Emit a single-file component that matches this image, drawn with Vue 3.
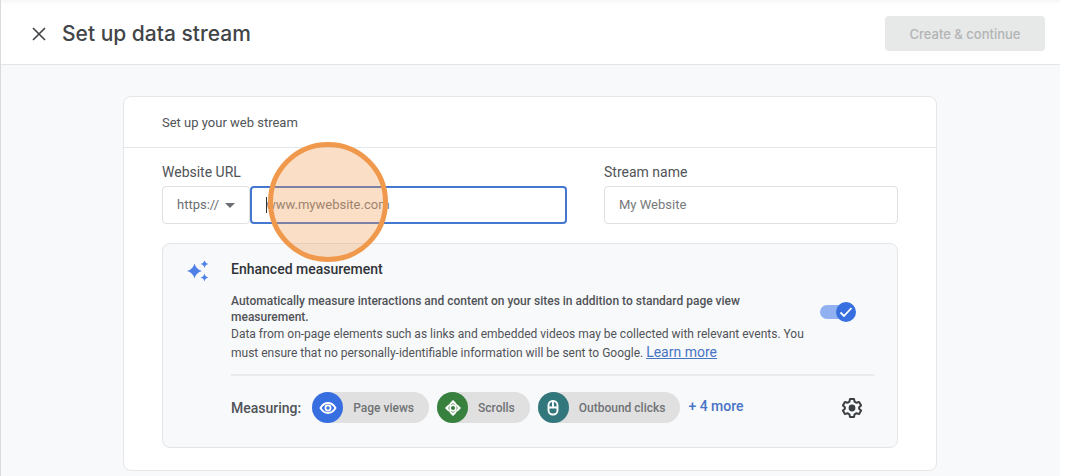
<script setup>
import { ref } from 'vue'

const protocol = ref('https://')
const url = ref('')
const streamName = ref('')
const enhanced = ref(true)
const chips = [
  { id: 'views', label: 'Page views' },
  { id: 'scrolls', label: 'Scrolls' },
  { id: 'clicks', label: 'Outbound clicks' },
]
</script>

<template>
  <div class="page">
    <header class="topbar">
      <button class="close" type="button" aria-label="Close">
        <svg width="14" height="14" viewBox="0 0 14 14"><path d="M1 1 13 13M13 1 1 13" fill="none" stroke="#44474a" stroke-width="1.7" /></svg>
      </button>
      <h1>Set up data stream</h1>
      <button class="create" type="button" disabled>Create &amp; continue</button>
    </header>

    <main>
      <form class="card" @submit.prevent>
        <h2>Set up your web stream</h2>
        <div class="body">
          <div class="fields">
            <div class="field">
              <label for="url">Website URL</label>
              <div class="url-row">
                <div class="protocol">
                  <select v-model="protocol" aria-label="Protocol">
                    <option>https://</option>
                    <option>http://</option>
                  </select>
                  <svg width="10" height="5" viewBox="0 0 10 5"><path d="M0 0h10L5 5z" fill="#6b6e72" /></svg>
                </div>
                <div class="url-box">
                  <input id="url" v-model="url" type="text" placeholder="www.mywebsite.com" />
                  <span class="caret"></span>
                  <span class="highlight"></span>
                </div>
              </div>
            </div>
            <div class="field">
              <label for="stream">Stream name</label>
              <input id="stream" v-model="streamName" type="text" placeholder="My Website" />
            </div>
          </div>

          <section class="panel">
            <svg class="sparkle" width="22" height="22" viewBox="0 0 22 22" fill="#4e80e8">
              <path d="M7.500 3.500Q9 9.500 15 11Q9 12.500 7.500 18.500Q6 12.500 0 11Q6 9.500 7.500 3.500z" />
              <path d="M17.500 .5Q18.200 3.300 21.500 4Q18.200 4.700 17.500 8Q16.800 4.700 13.500 4Q16.800 3.300 17.500 .5z" />
              <path d="M17.500 13.500Q18.200 16.800 21.500 17.500Q18.200 18.200 17.500 21.500Q16.800 18.200 13.500 17.500Q16.800 16.800 17.500 13.500z" />
            </svg>
            <div class="content">
              <h3>Enhanced measurement</h3>
              <div class="info">
                <div class="copy">
                  <p class="lead">Automatically measure interactions and content on your sites in addition to standard page view measurement.</p>
                  <p>Data from on-page elements such as links and embedded videos may be collected with relevant events. You must ensure that no personally-identifiable information will be sent to Google. <a href="#">Learn more</a></p>
                </div>
                <label class="switch">
                  <input v-model="enhanced" type="checkbox" role="switch" aria-label="Enhanced measurement" />
                  <span class="thumb">
                    <svg width="20" height="20" viewBox="0 0 20 20"><path d="M4.500 10.500 8 14 15.500 6" fill="none" stroke="#fff" stroke-width="1.800" /></svg>
                  </span>
                </label>
              </div>
              <div class="measuring">
                <span class="measuring-label">Measuring:</span>
                <ul>
                  <li v-for="chip in chips" :key="chip.id">
                    <span class="badge" :class="chip.id">
                      <svg v-if="chip.id === 'views'" width="18" height="18" viewBox="0 0 18 18" fill="none" stroke="#fff">
                        <path d="M1.500 9Q4.500 4 9 4T16.500 9Q13.500 14 9 14T1.500 9z" stroke-width="1.900" />
                        <circle cx="9" cy="9" r="2.600" stroke-width="1.700" />
                      </svg>
                      <svg v-else-if="chip.id === 'scrolls'" width="18" height="18" viewBox="0 0 18 18" fill="none" stroke="#fff">
                        <path d="M9 1 12.500 4.500H5.500zM9 17 5.500 13.500h7zM1 9 4.500 5.500v7zM17 9 13.500 12.500v-7z" fill="#fff" stroke="none" />
                        <path d="M9 2.500 15.500 9 9 15.500 2.500 9z" stroke-width="1.500" />
                        <circle cx="9" cy="9" r="2.900" stroke-width="1.700" />
                      </svg>
                      <svg v-else width="18" height="18" viewBox="0 0 18 18" fill="none" stroke="#fff" stroke-width="1.900">
                        <rect x="4.500" y="2" width="9" height="13.500" rx="4.200" />
                        <path d="M4.500 8.500h9M9 2v6.500" />
                      </svg>
                    </span>
                    <span class="chip-label">{{ chip.label }}</span>
                  </li>
                </ul>
                <button class="more" type="button">+ 4 more</button>
                <button class="gear" type="button" aria-label="Settings">
                  <svg width="20" height="20" viewBox="0 0 20 20">
                    <path d="M8 1h4l.6 2.700 1.900 1.100 2.600-.9 2 3.500-2 1.800v1.600l2 1.800-2 3.500-2.600-.9-1.900 1.100L12 19H8l-.6-2.700-1.900-1.100-2.600.9-2-3.500 2-1.800V9.200l-2-1.800 2-3.500 2.600.9 1.900-1.100z" fill="none" stroke="#3c4043" stroke-width="2" stroke-linejoin="round" />
                    <circle cx="10" cy="10" r="3.400" fill="#3c4043" />
                  </svg>
                </button>
              </div>
            </div>
          </section>
        </div>
      </form>
    </main>
  </div>
</template>

<style>
body {
  background: #fff;
}
</style>

<style scoped>
* {
  box-sizing: border-box;
}
.page {
  min-height: 100vh;
  margin-right: 6px;
  border-left: 1px solid #d9dbdd;
  background: #f8f9fb;
  font-family: Roboto, "Liberation Sans", sans-serif;
  font-size: 13px;
  color: #505357;
  display: flex;
  flex-direction: column;
}
h1, h2, h3, p, ul {
  margin: 0;
  padding: 0;
}
button {
  font: inherit;
  border: 0;
  padding: 0;
  background: none;
}
svg {
  display: block;
}
.topbar {
  display: flex;
  align-items: center;
  height: 65px;
  padding: 3px 15px 0 31px;
  background: linear-gradient(#f7f7f7, #fff 5px);
  border-bottom: 1px solid #e4e5e7;
}
h1 {
  margin-left: 16px;
  font: 500 21px/28px Inter, sans-serif;
  color: #424548;
}
.create {
  margin-left: auto;
  width: 160px;
  height: 35px;
  border-radius: 4px;
  background: #e7e8e8;
  color: #b2b4b5;
  font: 500 13px/20px Inter, sans-serif;
}
main {
  padding: 31px 123px 5px 122px;
}
.card {
  background: #fff;
  border: 1px solid #e5e6e8;
  border-radius: 8px;
}
h2 {
  padding: 17px 38px 15px;
  font-size: 13px;
  line-height: 18px;
  font-weight: 400;
  border-bottom: 1px solid #e5e6e8;
}
.body {
  padding: 15px 38px 22px;
}
.fields {
  display: grid;
  grid-template-columns: 405fr 294fr;
  gap: 37px;
}
label {
  display: block;
}
.field > label {
  font-size: 14px;
  line-height: 18px;
  margin-bottom: 5px;
}
input[type="text"], select {
  display: block;
  width: 100%;
  height: 38px;
  padding: 0 14px 2px;
  border: 1px solid #dfe0e2;
  border-radius: 4px;
  background: #fff;
  color: #6b6e72;
  font: 13px Roboto, sans-serif;
  outline: none;
}
input::placeholder {
  color: #77797c;
  opacity: 1;
}
.url-row {
  display: flex;
}
.protocol {
  position: relative;
  width: 88px;
}
select {
  appearance: none;
}
.protocol svg {
  position: absolute;
  right: 15px;
  top: 17px;
  pointer-events: none;
}
.url-box {
  position: relative;
  flex: 1;
}
.url-box input {
  border: 2px solid #4477cf;
}
.caret {
  position: absolute;
  left: 16px;
  top: 11px;
  width: 1px;
  height: 16px;
  background: #333;
}
.highlight {
  position: absolute;
  left: 18px;
  top: -44px;
  width: 120px;
  height: 120px;
  border: 5px solid #f0994d;
  border-radius: 50%;
  background: rgba(240, 153, 77, 0.32);
  pointer-events: none;
  z-index: 1;
}
.panel {
  display: flex;
  margin-top: 19px;
  padding: 16px 23px 24px 24px;
  border: 1px solid #e3e5e8;
  border-radius: 8px;
  background: #f8f9fb;
}
.sparkle {
  flex: none;
  margin-right: 22px;
}
.content {
  flex: 1;
}
h3 {
  font-size: 14px;
  line-height: 18px;
  font-weight: 500;
  color: #303337;
}
.info {
  display: flex;
  align-items: flex-start;
  justify-content: space-between;
  padding: 15px 17px 11px 0;
  border-bottom: 2px solid #e8eaec;
}
.copy {
  flex: 1;
  margin-right: 9px;
  font-size: 12px;
  line-height: 19px;
}
.lead {
  font-weight: 500;
  line-height: 16px;
}
a {
  font-size: 14px;
  line-height: 16px;
  color: #4874c4;
}
.switch {
  position: relative;
  width: 37px;
  height: 20px;
  margin-top: 9px;
}
.switch input {
  appearance: none;
  display: block;
  width: 32px;
  height: 14px;
  margin: 3px 0;
  border-radius: 7px;
  background: #b8bcc2;
}
.switch input:checked {
  background: #91b1f1;
}
.thumb {
  position: absolute;
  top: 0;
  left: 0;
  border-radius: 50%;
  background: #6b6e72;
  pointer-events: none;
}
input:checked + .thumb {
  left: 16px;
  background: #376fe0;
}
.measuring {
  display: flex;
  align-items: center;
  padding-top: 16px;
}
.measuring-label {
  font-size: 14px;
  font-weight: 500;
  margin-right: 11px;
}
ul {
  display: flex;
  gap: 8px;
  list-style: none;
}
li {
  display: flex;
  align-items: center;
  height: 31px;
  padding-right: 15px;
  border-radius: 16px;
  background: #e0e0e0;
}
.badge {
  display: grid;
  place-items: center;
  width: 31px;
  height: 31px;
  margin-right: 10px;
  border-radius: 50%;
}
.views {
  background: #376fe0;
}
.scrolls {
  background: #38803e;
}
.clicks {
  background: #32777c;
}
.chip-label {
  font-size: 12px;
  font-weight: 500;
  color: #707275;
}
.more {
  margin-left: 8px;
  padding-bottom: 3px;
  font-size: 14px;
  font-weight: 500;
  color: #4874c4;
}
.gear {
  margin-left: auto;
  margin-right: 12px;
}
</style>
